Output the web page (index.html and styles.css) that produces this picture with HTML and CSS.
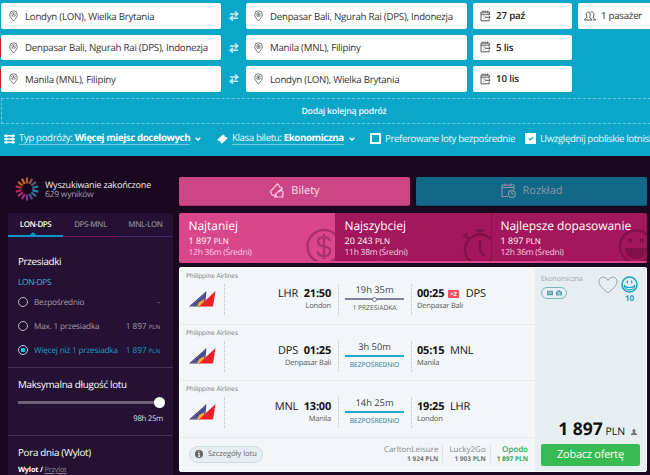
FILE: index.html
```html
<!DOCTYPE html>
<html lang="pl">
<head>
  <meta charset="UTF-8">
  <meta name="viewport" content="width=device-width, initial-scale=1.0">
  <title>Loty</title>
  <link rel="stylesheet" href="styles.css">
</head>
<body>

  <svg class="symbols" width="0" height="0">
    <symbol id="pin-a" viewBox="0 0 9 12">
      <path d="M4.5 11C2.6 8.800.7 6.900.7 4.600a3.800 3.800 0 0 1 7.600 0c0 2.300-1.900 4.200-3.800 6.400z" fill="none" stroke="#555" stroke-width=".8"/>
      <circle cx="4.500" cy="4.600" r="2.200" fill="none" stroke="#888" stroke-width=".6"/>
      <path d="M3.500 5.900l1-2.700 1 2.700" fill="none" stroke="#444" stroke-width=".7"/>
    </symbol>
    <symbol id="pin-b" viewBox="0 0 9 12">
      <path d="M4.5 11C2.6 8.800.7 6.900.7 4.600a3.800 3.800 0 0 1 7.600 0c0 2.300-1.900 4.200-3.800 6.400z" fill="none" stroke="#555" stroke-width=".8"/>
      <circle cx="4.500" cy="4.600" r="2.200" fill="none" stroke="#888" stroke-width=".6"/>
      <path d="M3.800 3.300v2.700h1.400V3.300zM3.800 4.600h1.400" fill="none" stroke="#444" stroke-width=".6"/>
    </symbol>
    <symbol id="swap" viewBox="0 0 10 10">
      <path d="M1 3h7.500M6 .5L8.800 3 6 5.300M9 7.200H1.500M4 4.900L1.200 7.200 4 9.600" fill="none" stroke="#c9edf5" stroke-width="1.500"/>
    </symbol>
    <symbol id="date" viewBox="0 0 11 12">
      <path d="M9.300 5V2H1v8.800h8.300V9.500M1 4.200h8.300M3 .6v2M5.200.6v2M7.400.6v2" fill="none" stroke="#444" stroke-width=".9"/>
      <path d="M2.800 6h3M2.800 8.300h2" stroke="#999" stroke-width=".8"/>
      <path d="M5 7.300h5M8.500 5.700l1.700 1.600-1.700 1.600" fill="none" stroke="#444" stroke-width=".9"/>
    </symbol>
    <symbol id="chevron" viewBox="0 0 6 4">
      <path d="M.7.7L3 3 5.300.7" fill="none" stroke="#fff" stroke-width="1.300"/>
    </symbol>
    <symbol id="pal" viewBox="0 0 27 16">
      <path d="M0 15.500L17.500 0l-1 9-6 6.500z" fill="#3d3f87"/>
      <path d="M2.500 15L16.500 2.500M5 15.200L16.500 6" stroke="#8b8cb5" stroke-width=".6"/>
      <path d="M7.500 15.500l3-4.500 5-3-2 6-3 1.500z" fill="#f2b01e"/>
      <path d="M10 15.500L26.500 0 24 15.500z" fill="#ec1f2b"/>
    </symbol>
  </svg>

  <div class="search">
    <div class="flight">
      <div class="field"><svg class="pin"><use href="#pin-a"/></svg>Londyn (LON), Wielka Brytania</div>
      <svg class="swap"><use href="#swap"/></svg>
      <div class="field"><svg class="pin"><use href="#pin-b"/></svg>Denpasar Bali, Ngurah Rai (DPS), Indonezja</div>
      <div class="field date"><svg class="cal"><use href="#date"/></svg>27 paź</div>
      <div class="field people">
        <svg class="users" viewBox="0 0 12 10"><path d="M.5 9c0-1.800 2.500-1.500 2.500-2.700C2 5.200 1.800 1 4.300 1s2.300 4.200 1.300 5.300C5.600 7.500 8 7.200 8 9zM6.500 1.300C7 .8 9.800.3 9.800 3.300c0 1.500-.3 2.300-.8 3C9 7.500 11.500 7.300 11.500 9H9" fill="none" stroke="#444" stroke-width=".9"/></svg>1 pasażer
      </div>
    </div>
    <div class="flight error">
      <div class="field"><svg class="pin"><use href="#pin-a"/></svg>Denpasar Bali, Ngurah Rai (DPS), Indonezja</div>
      <svg class="swap"><use href="#swap"/></svg>
      <div class="field"><svg class="pin"><use href="#pin-b"/></svg>Manila (MNL), Filipiny</div>
      <div class="field date"><svg class="cal"><use href="#date"/></svg>5 lis</div>
    </div>
    <div class="flight error">
      <div class="field"><svg class="pin"><use href="#pin-a"/></svg>Manila (MNL), Filipiny</div>
      <svg class="swap"><use href="#swap"/></svg>
      <div class="field"><svg class="pin"><use href="#pin-b"/></svg>Londyn (LON), Wielka Brytania</div>
      <div class="field date"><svg class="cal"><use href="#date"/></svg>10 lis</div>
    </div>
    <div class="add-flight">Dodaj kolejną podróż</div>
    <div class="options">
      <div class="option trip-type">
        <svg width="11" height="10" viewBox="0 0 11 10"><path d="M0 1.700h11M0 5h11M0 8.300h11" stroke="#fff" stroke-width="1.500"/><g fill="#fff"><circle cx="2.200" cy="1.700" r="1.500"/><circle cx="8.800" cy="1.700" r="1.500"/><circle cx="2.200" cy="5" r="1.500"/><circle cx="8.800" cy="5" r="1.500"/><circle cx="2.200" cy="8.300" r="1.500"/><circle cx="8.800" cy="8.300" r="1.500"/></g></svg>
        <span class="link">Typ podróży: <b>Więcej miejsc docelowych</b></span>
        <svg class="chevron"><use href="#chevron"/></svg>
      </div>
      <div class="option cabin">
        <svg width="11" height="10" viewBox="0 0 11 10"><path d="M.3 5.800L6.300.300l1.300 1.200c-.3 1 .5 1.800 1.600 1.500l1.500 1.300-6 5.400-1.300-1.200c.3-1-.6-1.800-1.700-1.500z" fill="#fff"/></svg>
        <span class="link">Klasa biletu: <b>Ekonomiczna</b></span>
        <svg class="chevron"><use href="#chevron"/></svg>
      </div>
      <div class="option direct"><span class="box"></span>Preferowane loty bezpośrednie</div>
      <div class="option nearby">
        <span class="box checked"><svg width="6" height="5" viewBox="0 0 6 5"><path d="M.6 2.300l1.700 1.700L5.400.8" fill="none" stroke="#0ca6c8" stroke-width="1.200"/></svg></span>Uwzględnij pobliskie lotniska
      </div>
    </div>
  </div>

  <div class="main">
    <div class="sidebar">
      <div class="status">
        <svg class="spinner" viewBox="-12 -12 24 24">
          <g stroke-width="2.300">
            <path d="M0-5.500V-11.500" stroke="#b5532b"/>
            <path d="M0-5.500V-11.500" stroke="#8a5148" transform="rotate(25.700)"/>
            <path d="M0-5.500V-11.500" stroke="#58586c" transform="rotate(51.400)"/>
            <path d="M0-5.500V-11.500" stroke="#2b7795" transform="rotate(77.100)"/>
            <path d="M0-5.500V-11.500" stroke="#2a85a8" transform="rotate(102.800)"/>
            <path d="M0-5.500V-11.500" stroke="#2d6f9b" transform="rotate(128.500)"/>
            <path d="M0-5.500V-11.500" stroke="#50568c" transform="rotate(154.200)"/>
            <path d="M0-5.500V-11.500" stroke="#7b3e7d" transform="rotate(180)"/>
            <path d="M0-5.500V-11.500" stroke="#9c2d72" transform="rotate(205.700)"/>
            <path d="M0-5.500V-11.500" stroke="#b02a6c" transform="rotate(231.400)"/>
            <path d="M0-5.500V-11.500" stroke="#ac2858" transform="rotate(257.100)"/>
            <path d="M0-5.500V-11.500" stroke="#a8323f" transform="rotate(282.800)"/>
            <path d="M0-5.500V-11.500" stroke="#c05a25" transform="rotate(308.500)"/>
            <path d="M0-5.500V-11.500" stroke="#c9691f" transform="rotate(334.200)"/>
          </g>
        </svg>
        <div>
          <div class="status-title">Wyszukiwanie zakończone</div>
          <div class="status-count">629 wyników</div>
        </div>
      </div>

      <div class="filters">
        <div class="filter-tabs">
          <div class="filter-tab active">LON-DPS</div>
          <div class="filter-tab second">DPS-MNL</div>
          <div class="filter-tab third">MNL-LON</div>
        </div>
        <div class="filter stops">
          <h3>Przesiadki</h3>
          <div class="route">LON-DPS</div>
          <div class="radio"><i></i><span>Bezpośrednio</span><em>-</em></div>
          <div class="radio"><i></i><span>Max. 1 przesiadka</span><em>1 897 <small>PLN</small></em></div>
          <div class="radio selected"><i></i><span>Więcej niż 1 przesiadka</span><em>1 897 <small>PLN</small></em></div>
        </div>
        <div class="filter duration">
          <h3>Maksymalna długość lotu</h3>
          <div class="slider"><div class="handle"></div></div>
          <div class="slider-value">98h 25m</div>
        </div>
        <div class="filter time">
          <h3>Pora dnia (Wylot)</h3>
          <div class="time-links"><b>Wylot /</b> <u>Przylot</u></div>
        </div>
      </div>
    </div>

    <div class="results">
      <div class="views">
        <div class="view tickets">
          <svg width="15" height="15" viewBox="0 0 15 15"><path d="M1 8.800L8.500.8l1.600 1.500c-.4 1.200.6 2.200 1.800 1.800l1.500 1.500-3.200 3.500M1 8.800l1.500 1.400c-.3 1.200.5 2 1.700 1.700l1.600 1.500 1-1M14 14H6.500c1.200-.8 1.200-2-.2-2.600L11.500 6.500 14 9v2.200c-1 .3-1 1.200 0 1.600z" fill="none" stroke="#f3cfe0" stroke-width="1.100"/></svg>Bilety
        </div>
        <div class="view schedule">
          <svg width="15" height="15" viewBox="0 0 15 15"><path d="M7 13.500H1V2h12v5M1 4.500h12M4 .5v2.500M10 .5v2.500" fill="none" stroke="#8f96a8" stroke-width="1.100"/><circle cx="10.800" cy="11" r="3.400" fill="none" stroke="#8f96a8" stroke-width="1.100"/><path d="M10.800 9v2.200h1.700" fill="none" stroke="#8f96a8"/></svg>Rozkład
        </div>
      </div>

      <div class="sorts">
        <div class="sort active">
          <h2>Najtaniej</h2>
          <div class="sort-price">1 897 <small>PLN</small></div>
          <div class="sort-time">12h 36m (Średni)</div>
          <svg class="sort-icon" width="40" height="40" viewBox="0 0 40 40"><g fill="none" stroke="#ad2e6c" stroke-width="2.300"><circle cx="29" cy="22.500" r="16.500"/><path d="M35 17c-1-3-3-4-6-4-8 0-8 8.500 0 9.300 8.500 1 8 9.700 0 9.700-3.500 0-6-1.500-6.500-4.500M29 10v25"/></g></svg>
        </div>
        <div class="sort fast">
          <h2>Najszybciej</h2>
          <div class="sort-price">20 243 <small>PLN</small></div>
          <div class="sort-time">11h 38m (Średni)</div>
          <svg class="sort-icon" width="40" height="40" viewBox="0 0 40 40"><g fill="none" stroke="#821149" stroke-width="2.300"><circle cx="29" cy="25.500" r="15"/><path d="M29 16v11l5 5M29 10V6.500M24.500 6.500h9M18 15l-4-4M12.500 13l4-4"/></g></svg>
        </div>
        <div class="sort best">
          <h2>Najlepsze dopasowanie</h2>
          <div class="sort-price">1 897 <small>PLN</small></div>
          <div class="sort-time">12h 36m (Średni)</div>
          <svg class="sort-icon" width="40" height="40" viewBox="0 0 40 40"><circle cx="29" cy="22.500" r="16" fill="none" stroke="#821149" stroke-width="2.300"/><path d="M18 24h22c0 8-5 11-11 11s-11-4-11-11z" fill="#821149"/><circle cx="23" cy="16.500" r="2.300" fill="#821149"/><circle cx="35" cy="16.500" r="2.300" fill="#821149"/></svg>
        </div>
      </div>

      <div class="ticket">
        <div class="legs">
          <div class="leg">
            <div class="airline">Philippine Airlines</div>
            <div class="leg-row">
              <div class="logo"><svg width="27" height="16"><use href="#pal"/></svg></div>
              <div class="from"><p>LHR <b>21:50</b></p><span>London</span></div>
              <div class="path stop"><p>19h 35m</p><div class="line"><i></i></div><span>1 PRZESIADKA</span></div>
              <div class="to"><p><b>00:25</b><mark>+2</mark>DPS</p><span>Denpasar Bali</span></div>
            </div>
          </div>
          <div class="leg">
            <div class="airline">Philippine Airlines</div>
            <div class="leg-row">
              <div class="logo"><svg width="27" height="16"><use href="#pal"/></svg></div>
              <div class="from"><p>DPS <b>01:25</b></p><span>Denpasar Bali</span></div>
              <div class="path"><p>3h 50m</p><div class="line"></div><span>BEZPOŚREDNIO</span></div>
              <div class="to"><p><b>05:15</b> MNL</p><span>Manila</span></div>
            </div>
          </div>
          <div class="leg">
            <div class="airline">Philippine Airlines</div>
            <div class="leg-row">
              <div class="logo"><svg width="27" height="16"><use href="#pal"/></svg></div>
              <div class="from"><p>MNL <b>13:00</b></p><span>Manila</span></div>
              <div class="path"><p>14h 25m</p><div class="line"></div><span>BEZPOŚREDNIO</span></div>
              <div class="to"><p><b>19:25</b> LHR</p><span>London</span></div>
            </div>
          </div>
          <div class="ticket-footer">
            <div class="details">
              <svg width="8" height="8" viewBox="0 0 8 8"><circle cx="4" cy="4" r="4" fill="#666"/><path d="M4 1.300v1.200M3 3.500h1.200v2.700M3 6.300h2.200" stroke="#fff" stroke-width="1" fill="none"/></svg>Szczegóły lotu
            </div>
            <div class="agents">
              <div class="agent"><span>CarltonLeisure</span><b>1 924 PLN</b></div>
              <div class="agent"><span>Lucky2Go</span><b>1 903 PLN</b></div>
              <div class="agent chosen"><span>Opodo</span><b>1 897 PLN</b></div>
            </div>
          </div>
        </div>

        <div class="offer">
          <div class="offer-top">
            <div>
              <div class="class">Ekonomiczna</div>
              <div class="bags">
                <svg width="15" height="6" viewBox="0 0 15 6"><path d="M0 .8h6v4.400H0zM9 1.500h1.500L11 .3h2l.5 1.200H15v4H9z" fill="#5b9fa9"/><path d="M1 2.800h4" stroke="#e6eef2" stroke-width=".8"/><circle cx="12" cy="3.500" r="1.100" fill="none" stroke="#e6eef2" stroke-width=".7"/></svg>
              </div>
            </div>
            <svg class="heart" width="20" height="18" viewBox="0 0 20 18"><path d="M10 17C6 13.500 1 10 1 5.700 1 0 8 0 10 4.300 12 0 19 0 19 5.700 19 10 14 13.500 10 17z" fill="none" stroke="#9aa3ab" stroke-width="1"/></svg>
            <div class="score">
              <svg width="17" height="17" viewBox="0 0 17 17"><circle cx="8.500" cy="8.500" r="7.500" fill="none" stroke="#1aa3c6" stroke-width="1.500"/><path d="M3.200 9c.8 2 2.600 2.500 5.300 2.500s4.500-.5 5.300-2.500c0 6.500-10.600 6.500-10.600 0z" fill="none" stroke="#1aa3c6" stroke-width="1.100"/><path d="M6.300 4.500v3M10.700 4.500v3" stroke="#1aa3c6" stroke-width="1.200"/></svg>
              <b>10</b>
            </div>
          </div>
          <div class="price"><b>1 897</b> PLN <svg width="6" height="6" viewBox="0 0 6 6"><path d="M0 6V4.800l2-1C1.200 2.500 1.200 0 3 0s1.800 2.500 1 3.800l2 1V6z" fill="#777"/></svg></div>
          <div class="buy">Zobacz ofertę</div>
        </div>
      </div>
    </div>
  </div>

</body>
</html>
```
FILE: styles.css
```css
* {
  box-sizing: border-box;
}

body {
  font-family: 'Open Sans', 'Noto Sans', sans-serif;
  text-rendering: geometricPrecision;
  width: 650px;
  height: 475px;
  margin: 0;
  overflow: hidden;
  background-color: #1a0720;
  color: #333;
}

h2, h3, p {
  margin: 0;
  font-weight: normal;
}

svg {
  flex: none;
}

.symbols {
  position: absolute;
}

/* search form */
.search {
  height: 156px;
  padding-top: 3px;
  overflow: hidden;
  background-color: #0ca6c8;
}

.flight {
  display: grid;
  grid-template-columns: 220px 25px 221px 99px 80px;
  height: 25.500px;
  margin-bottom: 6px;
  padding-left: 1px;
}

.flight.error {
  background: linear-gradient(#c81e1e, #c81e1e) no-repeat 0 3px / 1px 19px;
}

.field {
  display: flex;
  align-items: center;
  padding: 1px 0 0 8px;
  border-radius: 2px;
  background-color: #fff;
  font-size: 9.700px;
  letter-spacing: -.250px;
  white-space: nowrap;
}

.field.date {
  margin-left: 6px;
  margin-right: -6px;
  padding: 0 0 0 7px;
  font-weight: 600;
  letter-spacing: -.150px;
  color: #222;
}

.field.people {
  margin-left: 12px;
  margin-right: -12px;
  padding: 0 0 0 6px;
}

.pin {
  width: 9px;
  height: 12px;
  margin-right: 7px;
}

.cal {
  width: 11px;
  height: 12px;
  margin-right: 5px;
}

.users {
  width: 12px;
  height: 10px;
  margin-right: 5px;
}

.swap {
  width: 10px;
  height: 10px;
  margin: 8px 0 0 8px;
}

.add-flight {
  width: 660px;
  height: 26px;
  margin: 5px 0 0 1px;
  padding-left: 26px;
  border: 1px dashed #6dcbdf;
  font-size: 8.700px;
  font-weight: 600;
  letter-spacing: -.200px;
  line-height: 25px;
  text-align: center;
  color: #e8f8fb;
}

.options {
  display: flex;
  align-items: center;
  height: 20px;
  margin-top: 5px;
  padding-left: 4px;
  font-size: 9.700px;
  letter-spacing: -.380px;
  color: #e8f8fb;
  white-space: nowrap;
}

.option {
  display: flex;
  flex: none;
  align-items: center;
}

.option b {
  color: #fff;
}

.trip-type {
  width: 213px;
}

.cabin {
  width: 153px;
}

.direct {
  width: 155px;
}

.link {
  margin-left: 4px;
  line-height: 12px;
  border-bottom: 1px solid #6dcbdf;
}

.chevron {
  width: 6px;
  height: 4px;
  margin-left: 5px;
}

.box {
  display: flex;
  flex: none;
  align-items: center;
  justify-content: center;
  width: 11px;
  height: 11px;
  margin-right: 4px;
  border: 2px solid #fff;
}

.box.checked {
  background-color: #fff;
}

/* page body */
.main {
  display: flex;
  height: 319px;
  padding-left: 8px;
}

.sidebar {
  width: 165px;
  margin-right: 6px;
}

.status {
  display: flex;
  align-items: center;
  height: 57px;
  padding: 9px 0 0 7px;
  white-space: nowrap;
}

.spinner {
  width: 24px;
  height: 24px;
  margin-right: 6px;
}

.status-title {
  font-size: 9px;
  letter-spacing: -.190px;
  line-height: 11px;
  color: #eee;
}

.status-count {
  font-size: 8.500px;
  letter-spacing: -.250px;
  line-height: 10px;
  color: #a79fab;
}

.filters {
  height: 262px;
  border-radius: 3px 3px 0 0;
  background-color: #241133;
  overflow: hidden;
}

.filter-tabs {
  display: flex;
  height: 24px;
}

.filter-tab {
  flex: 1;
  border-bottom: 1px solid #4b2377;
  font-size: 8px;
  font-weight: 600;
  letter-spacing: -.450px;
  line-height: 23px;
  text-align: center;
  color: #8a8192;
}

.filter-tab.second {
  border-color: #7c1258;
}

.filter-tab.active {
  position: relative;
  border-bottom: 2px solid #0c94c8;
  color: #fff;
}

.filter-tab.active::after {
  content: '';
  position: absolute;
  bottom: 0;
  left: 22px;
  border: 3.500px solid transparent;
  border-top: 0;
  border-bottom: 3px solid #0c94c8;
}

.filter {
  padding: 0 13px 0 10px;
  border-bottom: 1px solid #43334f;
  white-space: nowrap;
}

.filter h3 {
  font-size: 9.800px;
  letter-spacing: -.290px;
  line-height: 14px;
  color: #fff;
}

.stops {
  height: 131px;
  padding-top: 18px;
}

.route {
  margin: 7px 0 6px;
  font-size: 8.500px;
  letter-spacing: -.400px;
  line-height: 14px;
  color: #35b5dc;
}

.radio {
  display: flex;
  align-items: center;
  height: 12px;
  margin-bottom: 12px;
  font-size: 8.200px;
  letter-spacing: -.180px;
  color: #a79fab;
}

.radio i {
  width: 10px;
  height: 10px;
  margin-right: 6px;
  border: 1px solid #bbb4c0;
  border-radius: 50%;
}

.radio em {
  margin-left: auto;
  font-style: normal;
  letter-spacing: 0;
}

.radio small {
  font-size: 6px;
}

.radio.selected {
  color: #18a0c4;
}

.radio.selected i {
  border-color: #a5d9e8;
  background: radial-gradient(circle, #1cc0ea 2px, transparent 2.500px);
}

.duration {
  height: 68px;
  padding-top: 10px;
}

.slider {
  height: 3px;
  margin-top: 9px;
  background-color: #6e6177;
}

.handle {
  float: right;
  width: 11px;
  height: 11px;
  margin: -4px -5px 0 0;
  border-radius: 50%;
  background-color: #fff;
}

.slider-value {
  margin-top: 9px;
  margin-right: -3px;
  font-size: 7.800px;
  letter-spacing: -.300px;
  line-height: 12px;
  text-align: right;
  color: #ddd;
}

.time {
  padding-top: 10px;
  border: 0;
}

.time-links {
  margin-top: 5px;
  font-size: 7.300px;
  letter-spacing: -.180px;
  line-height: 10px;
  color: #fff;
}

.time-links u {
  color: #8a8192;
}

/* view switch and sorting */
.results {
  width: 468px;
}

.views {
  display: flex;
  gap: 6px;
  height: 29px;
  margin: 21px 0 7px;
}

.view {
  flex: 1;
  display: flex;
  align-items: center;
  justify-content: center;
  gap: 7px;
  padding-bottom: 2px;
  border-radius: 2px;
  font-size: 11px;
}

.tickets {
  background-color: #cc4587;
  border-bottom: 1px solid #a83a72;
  color: #f8e0ec;
}

.schedule {
  background-color: #136787;
  border-bottom: 1px solid #14506f;
  color: #8f96a8;
}

.sorts {
  display: flex;
  height: 50px;
  border-radius: 2px;
  border-bottom: 2px solid #d8478c;
  overflow: hidden;
}

.sort {
  position: relative;
  flex: 1;
  padding: 5px 0 0 9.500px;
  background-color: #a3175c;
  color: #fff;
  white-space: nowrap;
}

.sort.active {
  background-color: #d8478c;
}

.sort.best {
  padding-left: 8.500px;
  border-left: 1px solid #8c124e;
}

.sort h2 {
  position: relative;
  z-index: 1;
  font-size: 12px;
  letter-spacing: -.050px;
  line-height: 16px;
  margin-bottom: 1px;
}

.sort-price {
  font-size: 9px;
  line-height: 11px;
}

.sort-price small {
  font-size: 8px;
}

.sort-time {
  font-size: 8.500px;
  letter-spacing: -.270px;
  line-height: 11px;
  color: #f3cfe0;
}

.sort-icon {
  position: absolute;
  right: 0;
  top: 11px;
}

/* ticket */
.ticket {
  display: flex;
  height: 205px;
  margin-top: 4px;
  border: 1px solid #fff;
  border-radius: 2px;
  background-color: #f3f6f8;
}

.legs {
  width: 355px;
}

.leg {
  height: 56.500px;
  padding: 3px 0 0 6px;
  border-bottom: 1px solid #e4eaee;
}

.airline {
  font-size: 6.500px;
  letter-spacing: -.120px;
  line-height: 10px;
  color: #777;
}

.leg-row {
  display: flex;
  height: 31px;
  margin-top: 3px;
  font-size: 7.500px;
  letter-spacing: -.200px;
  color: #555;
  white-space: nowrap;
}

.logo {
  width: 39px;
  padding: 7px 0 0 3px;
  border-right: 1px dotted #bbb;
}

.from {
  width: 114px;
  padding-right: 7px;
  border-right: 1px dotted #bbb;
  text-align: right;
}

.from p,
.to p {
  font-size: 11px;
  line-height: 19px;
  color: #111;
}

.from b {
  margin-left: 3px;
}

.to b {
  margin-right: 3px;
}

.to mark {
  display: inline-block;
  margin: 0 7px 0 1px;
  padding: 0 2px;
  border-radius: 1px;
  background-color: #fa4f5b;
  font-size: 6px;
  font-weight: bold;
  line-height: 8px;
  vertical-align: 1px;
  color: #fff;
}

.from span,
.to span {
  display: block;
  line-height: 7px;
}

.path {
  width: 73px;
  padding: 0 7px 0 6px;
  border-right: 1px dotted #bbb;
  letter-spacing: 0;
  text-align: center;
}

.path p {
  font-size: 9.300px;
  line-height: 12px;
  color: #444;
}

.line {
  height: 2px;
  margin: 2px 0 3px;
  background-color: #1fa9c9;
}

.path span {
  display: block;
  font-size: 6.700px;
  line-height: 10px;
  color: #26839a;
}

.stop .line {
  background-color: #85809a;
}

.stop .line i {
  display: block;
  position: relative;
  top: -1.500px;
  width: 5px;
  height: 5px;
  margin: 0 auto;
  border: 1px solid #777;
  border-radius: 50%;
  background-color: #fff;
}

.path.stop span {
  color: #555;
}

.to {
  padding-left: 5px;
}

.ticket-footer {
  display: flex;
  align-items: center;
  justify-content: space-between;
  height: 33px;
  padding: 0 7px 0 9px;
  white-space: nowrap;
}

.details {
  display: flex;
  align-items: center;
  gap: 5px;
  width: 74px;
  height: 17px;
  padding-left: 5px;
  border: 1px solid #cfdde6;
  border-radius: 9px;
  background-color: #e6eef2;
  font-size: 7.500px;
  color: #666;
}

.agents {
  display: flex;
}

.agent {
  padding-left: 6px;
  font-size: 8px;
  line-height: 9px;
  text-align: right;
  color: #888;
}

.agent + .agent {
  margin-left: 4px;
  border-left: 1px solid #dde3e7;
}

.agent span,
.agent b {
  display: block;
}

.agent b {
  font-size: 6.500px;
  color: #777;
}

.agent.chosen,
.agent.chosen b {
  color: #36a653;
}

.agent.chosen span {
  font-weight: 600;
}

.offer {
  display: flex;
  flex-direction: column;
  width: 111px;
  padding: 7px 6px 5px;
  background-color: #e6eef2;
}

.offer-top {
  display: flex;
  align-items: flex-start;
}

.class {
  width: 57px;
  font-size: 7px;
  letter-spacing: -.150px;
  line-height: 10px;
  color: #a0a8ae;
}

.bags {
  display: flex;
  align-items: center;
  justify-content: center;
  width: 26px;
  height: 12px;
  margin-top: 2px;
  border: 1px solid #80b4bc;
  border-radius: 6px;
}

.heart {
  margin: 1px 3px 0 0;
}

.score {
  width: 17px;
  font-size: 8px;
  line-height: 10px;
  text-align: center;
  color: #1aa3c6;
}

.score svg {
  display: block;
  margin: 1px 0;
}

.price {
  margin-top: auto;
  padding-right: 3px;
  font-size: 10.500px;
  line-height: 20px;
  text-align: right;
  white-space: nowrap;
  color: #111;
}

.price b {
  font-size: 17.500px;
}

.price svg {
  margin-left: 3px;
}

.buy {
  width: 99px;
  height: 22px;
  margin-top: 2px;
  border-radius: 2px;
  background-color: #38bb52;
  font-size: 11px;
  letter-spacing: -.250px;
  line-height: 22px;
  text-align: center;
  color: #fff;
}
```
